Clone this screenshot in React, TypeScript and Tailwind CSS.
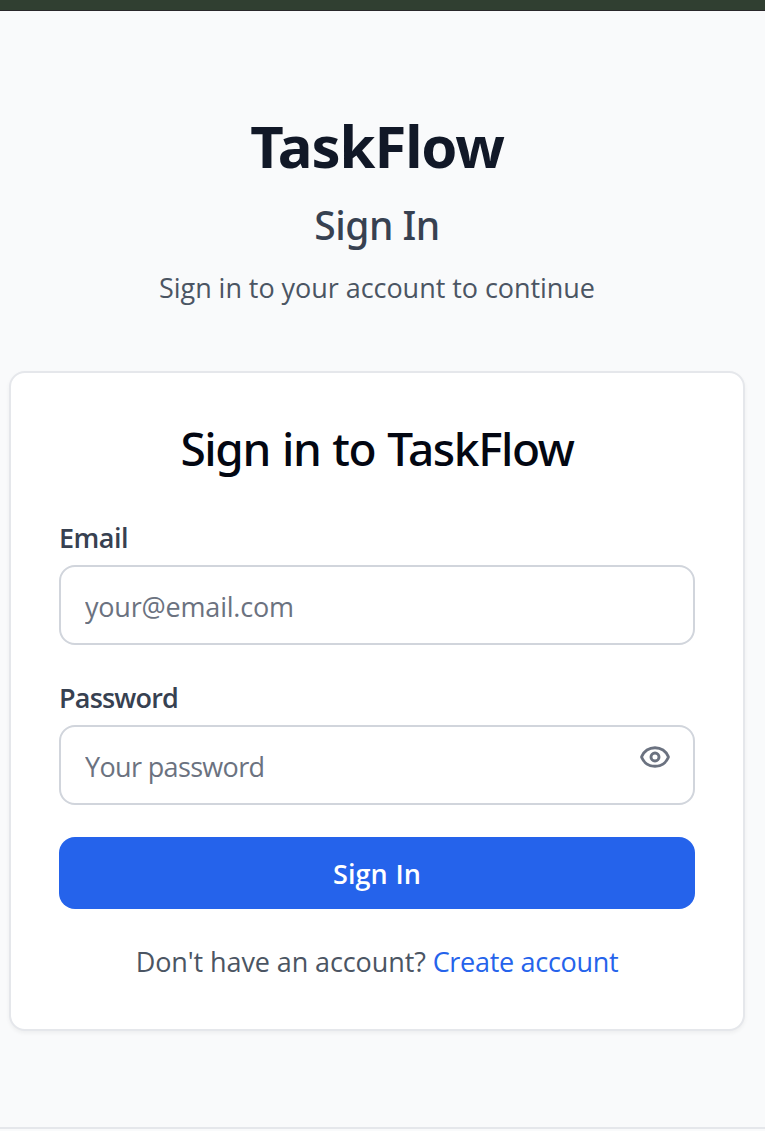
import { Eye } from 'lucide-react';

const inputClass =
  'block h-20 w-full rounded-[16px] border-2 border-gray-300 bg-white pt-[2px] pl-6 text-[27px] text-gray-900 outline-none placeholder:text-[#6b7280]';
const labelClass = 'block h-10 pt-px text-[27px] leading-10 font-semibold text-[#374151]';

export default function App() {
  return (
    <div className="flex h-[1131px] flex-col overflow-hidden bg-[#f9fafb] font-['Open_Sans',sans-serif]">
      <div className="h-[11px] shrink-0 border-b border-[#29272a] bg-[#303f31]" />
      <main className="flex flex-1 flex-col pt-[99px] pr-5 pl-[9px]">
        <header className="h-[197px] text-center">
          <h1 className="font-['Noto_Sans',sans-serif] text-[58px] leading-[72px] font-bold tracking-[-1.1px] text-[#111827]">TaskFlow</h1>
          <h2 className="mt-[15px] font-['Noto_Sans',sans-serif] text-[39px] leading-[56px] font-medium tracking-[-0.5px] text-[#374151]">Sign In</h2>
          <p className="mt-[15px] text-[27px] leading-10 tracking-[-0.05px] text-[#4b5563]">Sign in to your account to continue</p>
        </header>
        <section className="mt-16 h-[660px] rounded-[16px] border-2 border-[#e5e7eb] bg-white px-12 pt-[43px] shadow-[0_2px_4px_rgba(0,0,0,0.05)]">
          <h3 className="text-center font-['Noto_Sans',sans-serif] text-[46px] leading-[64px] font-medium tracking-[-1.4px] [word-spacing:1.4px] text-[#030712]">Sign in to TaskFlow</h3>
          <form className="mt-[37px]">
            <label htmlFor="email" className={`${labelClass} tracking-[-0.5px]`}>Email</label>
            <input id="email" type="email" placeholder="your@email.com" className={`${inputClass} mt-2 tracking-[-0.2px]`} />
            <label htmlFor="password" className={`${labelClass} mt-8 tracking-[-0.8px]`}>Password</label>
            <div className="relative mt-2">
              <input id="password" type="password" placeholder="Your password" className={`${inputClass} tracking-[-0.65px]`} />
              <button type="button" aria-label="Show password" className="absolute top-4 right-6 text-[#6b7280]">
                <Eye size={32} strokeWidth={2.2} />
              </button>
            </div>
            <button type="submit" className="mt-8 block h-[72px] w-full rounded-[16px] bg-[#2563eb] pt-px text-[27px] leading-[71px] font-semibold [word-spacing:1px] text-white">Sign In</button>
          </form>
          <p className="mt-[33px] text-center text-[27px] leading-10 tracking-[-0.1px] text-[#4b5563]">
            Don't have an account? <a href="#" className="tracking-[-0.3px] text-[#2563eb]">Create account</a>
          </p>
        </section>
      </main>
      <footer className="h-1 shrink-0 border-t-2 border-[#e5e7eb] bg-[#f9fafb]" />
    </div>
  );
}
